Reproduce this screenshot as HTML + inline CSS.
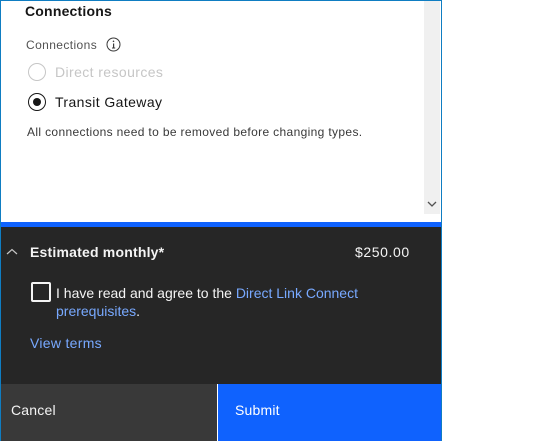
<!DOCTYPE html>
<html><head><style>
*{margin:0;padding:0;box-sizing:border-box}
body{width:538px;height:441px;background:#fff;font-family:"Liberation Sans",sans-serif;position:relative;overflow:hidden}
.frame{position:absolute;left:0;top:0;width:442px;height:441px;border:1px solid #0f7dc2;border-bottom:0;overflow:hidden}
.abs{position:absolute;white-space:nowrap;letter-spacing:0.2px}
</style></head><body>
<div class="frame">
  <div class="abs" style="left:24px;top:2px;font-size:14px;font-weight:bold;color:#161616">Connections</div>
  <div class="abs" style="left:25px;top:37px;font-size:12px;color:#525252;letter-spacing:0.4px">Connections</div>
  <svg class="abs" style="left:105px;top:36px" width="15" height="15" viewBox="0 0 15 15"><circle cx="7.5" cy="7.5" r="6.5" fill="none" stroke="#393939" stroke-width="1"/><rect x="7" y="6.5" width="1.2" height="4.5" fill="#393939"/><rect x="6" y="10.5" width="3.2" height="1" fill="#393939"/><circle cx="7.5" cy="4.3" r="0.8" fill="#393939"/></svg>
  <div class="abs" style="left:27px;top:62px;width:18px;height:18px;border:1px solid #c6c6c6;border-radius:50%"></div>
  <div class="abs" style="left:54px;top:63px;font-size:14px;color:#c6c6c6;letter-spacing:0.4px">Direct resources</div>
  <div class="abs" style="left:27px;top:92px;width:18px;height:18px;border:1px solid #161616;border-radius:50%"></div>
  <div class="abs" style="left:32px;top:97px;width:8px;height:8px;background:#161616;border-radius:50%"></div>
  <div class="abs" style="left:54px;top:93px;font-size:14px;color:#161616;letter-spacing:0.4px">Transit Gateway</div>
  <div class="abs" style="left:26px;top:124px;font-size:12px;color:#393939;letter-spacing:0.35px">All connections need to be removed before changing types.</div>
  <div class="abs" style="left:423px;top:-1px;width:16px;height:214px;background:#f0f0f0"></div>
  <svg class="abs" style="left:426px;top:199px" width="10" height="8"><path d="M1 2 L5 6 L9 2" fill="none" stroke="#525252" stroke-width="1.3"/></svg>
  <div class="abs" style="left:-1px;top:221px;width:444px;height:5px;background:#0f62fe"></div>
  <div class="abs" style="left:-1px;top:226px;width:444px;height:157px;background:#262626"></div>
  <svg class="abs" style="left:5px;top:247px" width="12" height="8"><path d="M1 6 L6 1.5 L11 6" fill="none" stroke="#c6c6c6" stroke-width="1.2"/></svg>
  <div class="abs" style="left:29px;top:243px;font-size:14px;font-weight:bold;color:#f4f4f4">Estimated monthly*</div>
  <div class="abs" style="left:354px;top:243px;font-size:14px;color:#f4f4f4;letter-spacing:0.6px">$250.00</div>
  <div class="abs" style="left:30px;top:281px;width:20px;height:20px;border:2px solid #f4f4f4;border-radius:2px;box-shadow:inset 0 0 0 1px #262626"></div>
  <div class="abs" style="left:55px;top:283px;font-size:14px;line-height:18px;color:#f4f4f4;letter-spacing:0">I have read and agree to the <span style="color:#78a9ff">Direct Link Connect</span><br><span style="color:#78a9ff">prerequisites</span>.</div>
  <div class="abs" style="left:29px;top:334px;font-size:14px;color:#78a9ff;letter-spacing:0.3px">View terms</div>
  <div class="abs" style="left:-1px;top:383px;width:217px;height:58px;background:#393939"></div>
  <div class="abs" style="left:10px;top:401px;font-size:14px;color:#f4f4f4">Cancel</div>
  <div class="abs" style="left:217px;top:383px;width:226px;height:58px;background:#0f62fe"></div>
  <div class="abs" style="left:234px;top:401px;font-size:14px;color:#fff">Submit</div>
</div>
</body></html>
